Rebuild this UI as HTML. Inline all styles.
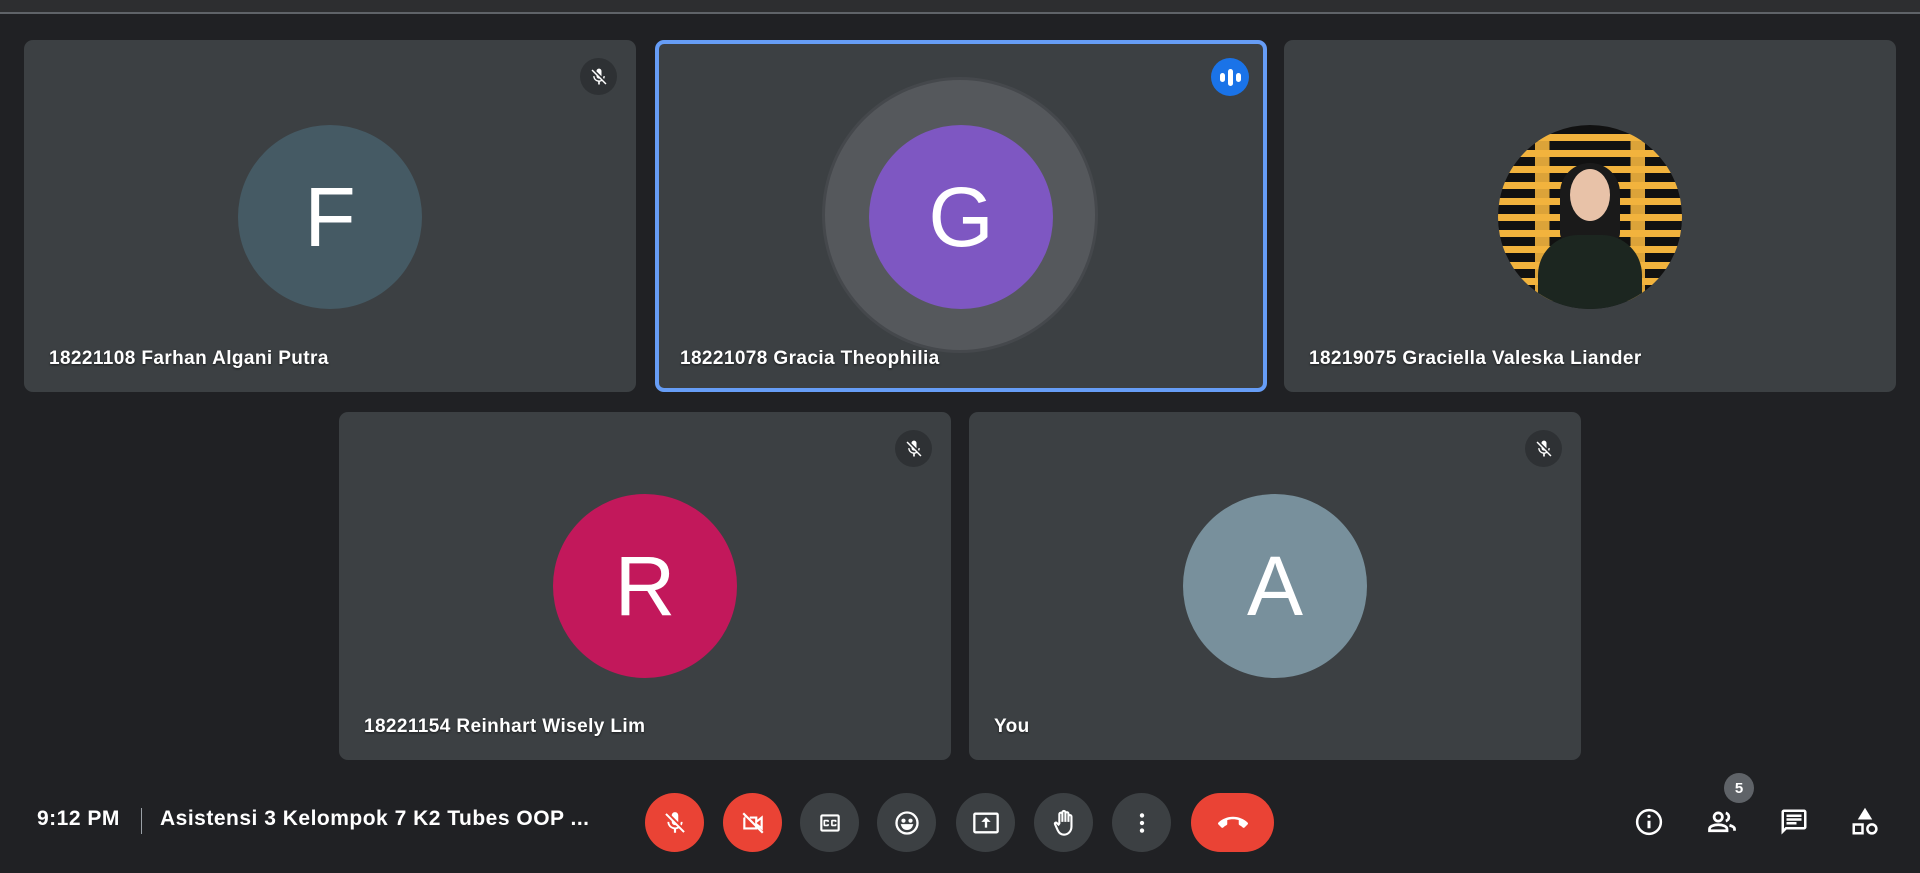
<!DOCTYPE html>
<html><head><meta charset="utf-8"><style>
*{margin:0;padding:0;box-sizing:border-box}
body{width:1920px;height:873px;background:#202124;position:relative;overflow:hidden;font-family:"Liberation Sans",sans-serif;color:#fff}
.top{position:absolute;left:0;top:0;width:1920px;height:14px;background:#2d2e30;border-bottom:2px solid #5f6368}
.tile{position:absolute;background:#3c4043;border-radius:9px;width:612px}
.av{position:absolute;width:184px;height:184px;border-radius:50%;left:214px;top:85px;display:flex;align-items:center;justify-content:center;font-size:84px;color:#fff}
.name{position:absolute;left:25px;bottom:22px;font-size:19px;letter-spacing:.4px;font-weight:bold;text-shadow:0 1px 2px rgba(0,0,0,.6)}
.mute{position:absolute;right:19px;top:18px;width:37px;height:37px;border-radius:50%;background:#2e3134;display:flex;align-items:center;justify-content:center}
.btn{position:absolute;top:793px;width:59px;height:59px;border-radius:50%;background:#3c4043;display:flex;align-items:center;justify-content:center}
.red{background:#ea4335}
.ri{position:absolute;top:807px;width:30px;height:30px}
.bt{position:absolute;top:807px;font-size:21px;font-weight:bold;letter-spacing:.5px}
</style></head><body>
<div class="top"></div>

<div class="tile" style="left:24px;top:40px;height:352px">
 <div class="av" style="background:#455a64">F</div>
 <div class="mute"><svg width="20" height="20" viewBox="0 0 24 24" fill="#fff"><path d="M19 11h-1.7c0 .74-.16 1.43-.43 2.05l1.23 1.23c.56-.98.9-2.09.9-3.28zm-4.02.17c0-.06.02-.11.02-.17V5c0-1.66-1.34-3-3-3S9 3.34 9 5v.18l5.98 5.99zM4.27 3L3 4.27l6.01 6.01V11c0 1.66 1.33 3 2.99 3 .22 0 .44-.03.65-.08l1.66 1.66c-.71.33-1.5.52-2.31.52-2.76 0-5.3-2.1-5.3-5.1H5c0 3.41 2.72 6.23 6 6.72V21h2v-3.28c.91-.13 1.77-.45 2.54-.9L19.73 21 21 19.73 4.27 3z"/></svg></div>
 <div class="name">18221108 Farhan Algani Putra</div>
</div>

<div class="tile" style="left:655px;top:40px;height:352px;border:4px solid #669df6">
 <div style="position:absolute;left:166px;top:36px;width:270px;height:270px;border-radius:50%;background:#55585c;box-shadow:0 0 0 3px #45484c"></div>
 <div class="av" style="background:#7e57c2;left:210px;top:81px">G</div>
 <div style="position:absolute;right:14px;top:14px;width:38px;height:38px;border-radius:50%;background:#1a73e8;display:flex;align-items:center;justify-content:center;gap:3px">
  <i style="width:5px;height:9px;background:#fff;border-radius:3px"></i><i style="width:5px;height:17px;background:#fff;border-radius:3px"></i><i style="width:5px;height:9px;background:#fff;border-radius:3px"></i></div>
 <div class="name" style="left:21px;bottom:18px">18221078 Gracia Theophilia</div>
</div>

<div class="tile" style="left:1284px;top:40px;height:352px">
 <div class="av" style="background:repeating-linear-gradient(#111 0 9px,#f2b33d 9px 16px);overflow:hidden">
  <div style="position:absolute;left:0;top:0;width:184px;height:184px;background:linear-gradient(90deg,transparent 0 20%,rgba(242,179,61,.9) 20% 28%,transparent 28% 72%,rgba(242,179,61,.9) 72% 80%,transparent 80%)"></div>
  <div style="position:absolute;left:62px;top:38px;width:60px;height:80px;border-radius:30px 30px 10px 10px;background:#1a1a1a"></div>
  <div style="position:absolute;left:72px;top:44px;width:40px;height:52px;border-radius:50%;background:#e8c2a8"></div>
  <div style="position:absolute;left:40px;top:110px;width:104px;height:90px;border-radius:40px 40px 0 0;background:#1c2620"></div>
 </div>
 <div class="name">18219075 Graciella Valeska Liander</div>
</div>

<div class="tile" style="left:339px;top:412px;height:348px">
 <div class="av" style="background:#c2185b;top:82px">R</div>
 <div class="mute"><svg width="20" height="20" viewBox="0 0 24 24" fill="#fff"><path d="M19 11h-1.7c0 .74-.16 1.43-.43 2.05l1.23 1.23c.56-.98.9-2.09.9-3.28zm-4.02.17c0-.06.02-.11.02-.17V5c0-1.66-1.34-3-3-3S9 3.34 9 5v.18l5.98 5.99zM4.27 3L3 4.27l6.01 6.01V11c0 1.66 1.33 3 2.99 3 .22 0 .44-.03.65-.08l1.66 1.66c-.71.33-1.5.52-2.31.52-2.76 0-5.3-2.1-5.3-5.1H5c0 3.41 2.72 6.23 6 6.72V21h2v-3.28c.91-.13 1.77-.45 2.54-.9L19.73 21 21 19.73 4.27 3z"/></svg></div>
 <div class="name">18221154 Reinhart Wisely Lim</div>
</div>

<div class="tile" style="left:969px;top:412px;height:348px">
 <div class="av" style="background:#78909c;top:82px">A</div>
 <div class="mute"><svg width="20" height="20" viewBox="0 0 24 24" fill="#fff"><path d="M19 11h-1.7c0 .74-.16 1.43-.43 2.05l1.23 1.23c.56-.98.9-2.09.9-3.28zm-4.02.17c0-.06.02-.11.02-.17V5c0-1.66-1.34-3-3-3S9 3.34 9 5v.18l5.98 5.99zM4.27 3L3 4.27l6.01 6.01V11c0 1.66 1.33 3 2.99 3 .22 0 .44-.03.65-.08l1.66 1.66c-.71.33-1.5.52-2.31.52-2.76 0-5.3-2.1-5.3-5.1H5c0 3.41 2.72 6.23 6 6.72V21h2v-3.28c.91-.13 1.77-.45 2.54-.9L19.73 21 21 19.73 4.27 3z"/></svg></div>
 <div class="name">You</div>
</div>

<div class="bt" style="left:37px">9:12 PM</div>
<div style="position:absolute;left:141px;top:808px;width:1px;height:26px;background:#9aa0a6"></div>
<div class="bt" style="left:160px">Asistensi 3 Kelompok 7 K2 Tubes OOP ...</div>

<div class="btn red" style="left:645px"><svg width="26" height="26" viewBox="0 0 24 24" fill="#fff"><path d="M19 11h-1.7c0 .74-.16 1.43-.43 2.05l1.23 1.23c.56-.98.9-2.09.9-3.28zm-4.02.17c0-.06.02-.11.02-.17V5c0-1.66-1.34-3-3-3S9 3.34 9 5v.18l5.98 5.99zM4.27 3L3 4.27l6.01 6.01V11c0 1.66 1.33 3 2.99 3 .22 0 .44-.03.65-.08l1.66 1.66c-.71.33-1.5.52-2.31.52-2.76 0-5.3-2.1-5.3-5.1H5c0 3.41 2.72 6.23 6 6.72V21h2v-3.28c.91-.13 1.77-.45 2.54-.9L19.73 21 21 19.73 4.27 3z"/></svg></div>
<div class="btn red" style="left:723px"><svg width="26" height="26" viewBox="0 0 24 24" fill="none" stroke="#fff" stroke-width="2"><path d="M4 7h1M9 7h6v4l5-4v10l-5-4v4H4V7"/><path d="M3 3l18 18"/></svg></div>
<div class="btn" style="left:800px"><svg width="26" height="26" viewBox="0 0 24 24" fill="#fff"><path d="M19 4H5c-1.11 0-2 .9-2 2v12c0 1.1.89 2 2 2h14c1.1 0 2-.9 2-2V6c0-1.1-.9-2-2-2zm0 14H5V6h14v12zM7 15h3c.55 0 1-.45 1-1v-1H9.5v.5h-2v-3h2v.5H11v-1c0-.55-.45-1-1-1H7c-.55 0-1 .45-1 1v4c0 .55.45 1 1 1zm7 0h3c.55 0 1-.45 1-1v-1h-1.5v.5h-2v-3h2v.5H18v-1c0-.55-.45-1-1-1h-3c-.55 0-1 .45-1 1v4c0 .55.45 1 1 1z"/></svg></div>
<div class="btn" style="left:877px"><svg width="28" height="28" viewBox="0 0 24 24" fill="none" stroke="#fff" stroke-width="2"><circle cx="12" cy="12" r="9"/><circle cx="9" cy="10" r=".8" fill="#fff"/><circle cx="15" cy="10" r=".8" fill="#fff"/><path d="M8 14h8c-.7 2-2.2 3-4 3s-3.3-1-4-3z" fill="#fff"/></svg></div>
<div class="btn" style="left:956px"><svg width="28" height="28" viewBox="0 0 24 24" fill="#fff"><path d="M21 3H3c-1.1 0-2 .9-2 2v14c0 1.1.9 2 2 2h18c1.1 0 2-.9 2-2V5c0-1.1-.9-2-2-2zm0 16H3V5h18v14zM11 16h2v-5h3l-4-4-4 4h3z"/></svg></div>
<div class="btn" style="left:1034px"><svg width="28" height="28" viewBox="0 0 24 24" fill="none" stroke="#fff" stroke-width="1.8" stroke-linejoin="round"><path d="M8 13V4.5a1.3 1.3 0 0 1 2.6 0V11M10.6 11V3a1.3 1.3 0 0 1 2.6 0v8M13.2 11V4a1.3 1.3 0 0 1 2.6 0v7M15.8 11V6.5a1.3 1.3 0 0 1 2.6 0V15c0 4-2.8 7-6.4 7-2.6 0-4.3-1.4-5.3-3.6L4.3 13c-.4-.9.6-1.7 1.4-1.1L8 14"/></svg></div>
<div class="btn" style="left:1112px"><svg width="26" height="26" viewBox="0 0 24 24" fill="#fff"><circle cx="12" cy="5" r="2"/><circle cx="12" cy="12" r="2"/><circle cx="12" cy="19" r="2"/></svg></div>
<div class="btn red" style="left:1191px;width:83px;border-radius:30px"><svg width="30" height="30" viewBox="0 0 24 24" fill="#fff"><path d="M12 9c-1.6 0-3.15.25-4.6.72v3.1c0 .39-.23.74-.56.9-.98.49-1.87 1.12-2.66 1.850-.18.18-.43.28-.7.28-.28 0-.53-.11-.71-.29L.29 13.08c-.18-.17-.29-.42-.29-.7 0-.28.11-.53.29-.71C3.34 8.78 7.46 7 12 7s8.66 1.78 11.71 4.67c.18.18.29.43.29.71 0 .28-.11.53-.29.71l-2.48 2.48c-.18.18-.43.29-.71.29-.27 0-.52-.11-.7-.28-.79-.74-1.69-1.36-2.67-1.85-.33-.16-.56-.5-.56-.9v-3.1C15.15 9.25 13.6 9 12 9z"/></svg></div>

<svg class="ri" style="left:1634px" viewBox="0 0 24 24" fill="none" stroke="#fff" stroke-width="2"><circle cx="12" cy="12" r="9.5"/><path d="M12 11v6" stroke-width="2.4"/><circle cx="12" cy="7.5" r="1.3" fill="#fff" stroke="none"/></svg>
<div style="position:absolute;left:1724px;top:773px;width:30px;height:30px;border-radius:50%;background:#5f6368;font-size:15px;font-weight:bold;display:flex;align-items:center;justify-content:center">5</div>
<svg class="ri" style="left:1707px" viewBox="0 0 24 24" fill="none" stroke="#fff" stroke-width="2.2"><circle cx="9" cy="8" r="3.3"/><path d="M2 19v-1.5c0-2 3.5-3.3 7-3.3s7 1.3 7 3.3V19z"/><path d="M15 4.8a3.3 3.3 0 0 1 0 6.4M18 14.6c2 .6 4 1.6 4 2.9V19"/></svg>
<svg class="ri" style="left:1779px" viewBox="0 0 24 24" fill="#fff"><path d="M20 2H4c-1.1 0-2 .9-2 2v18l4-4h14c1.1 0 2-.9 2-2V4c0-1.1-.9-2-2-2zm0 14H5.2L4 17.2V4h16v12zM6 12h8v2H6zm0-3h12v2H6zm0-3h12v2H6z"/></svg>
<svg class="ri" style="left:1850px" viewBox="0 0 24 24" fill="none" stroke="#fff" stroke-width="2"><path d="M12 2.5l4 6.5H8z" fill="#fff"/><rect x="3" y="14" width="7" height="7"/><circle cx="17.5" cy="17.5" r="3.6"/></svg>
</body></html>
